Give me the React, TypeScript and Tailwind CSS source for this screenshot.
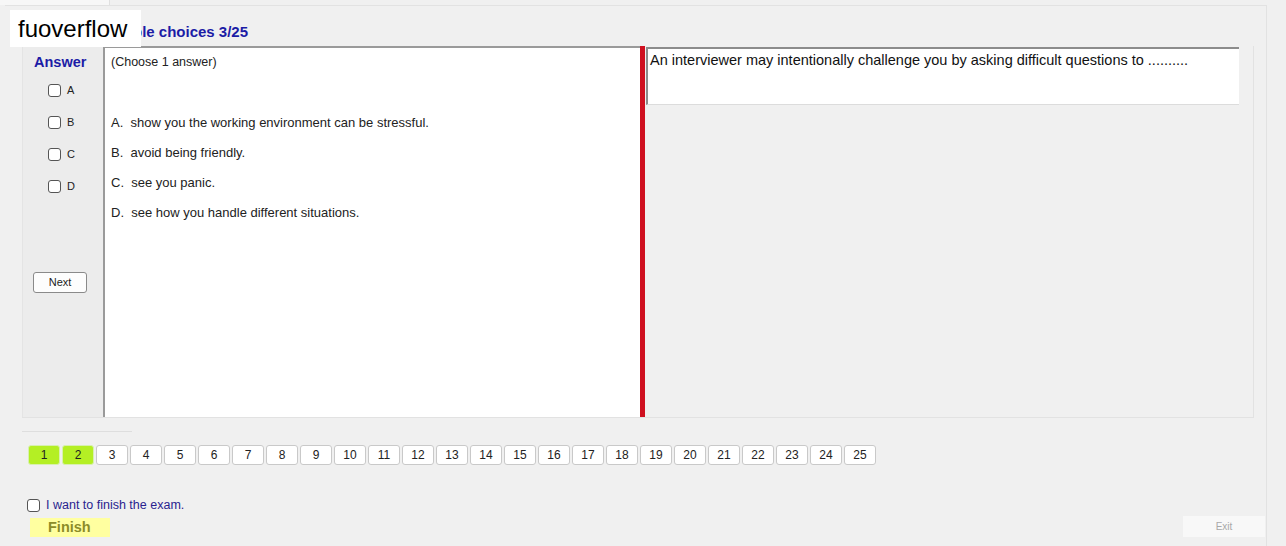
import { useState } from 'react';

const options = [
  'A.  show you the working environment can be stressful.',
  'B.  avoid being friendly.',
  'C.  see you panic.',
  'D.  see how you handle different situations.',
];

function Box({ checked, onClick }: { checked?: boolean; onClick?: () => void }) {
  return (
    <span
      onClick={onClick}
      className={`inline-block w-[13px] h-[13px] rounded-[3px] border border-[#555] ${checked ? 'bg-[#3b6fd6]' : 'bg-white'}`}
    />
  );
}

export default function App() {
  const [answers, setAnswers] = useState<string[]>([]);
  const [finish, setFinish] = useState(false);
  const toggle = (k: string) =>
    setAnswers(a => (a.includes(k) ? a.filter(x => x !== k) : [...a, k]));

  return (
    <div className="relative w-[1286px] h-[546px] overflow-hidden bg-[#f0f0f0] font-['Liberation_Sans',Arial,sans-serif] text-black">
      {/* tab frame */}
      <div className="absolute left-[5px] top-[5px] w-[1262px] h-[545px] border-t border-r border-[#e2e2e2] pointer-events-none" />
      <div className="absolute left-0 top-0 w-[110px] h-[5px] bg-[#f7f7f7] border-r border-[#e0e0e0]" />

      {/* watermark */}
      <div className="absolute left-[10px] top-[10px] w-[131px] h-[37px] bg-white z-10 flex items-center pl-[8px] text-[24px] leading-none">
        fuoverflow
      </div>

      <div className="pt-[23px] pl-[98px] h-[46px] text-[15px] leading-[17px] font-bold text-[#1c1ca6]">Multiple choices 3/25</div>

      {/* main panel */}
      <div className="ml-[22px] w-[1232px] h-[372px] flex border-r border-b border-[#e2e2e2]">
        <div className="w-[81px] bg-[#ececec] border-l border-[#e4e4e4] flex flex-col">
          <div className="pl-[11px] pt-[8px] text-[14.5px] leading-[17px] font-bold text-[#1c1ca6]">Answer</div>
          <div className="flex flex-col gap-[19px] pt-[13px] pl-[25px]">
            {['A', 'B', 'C', 'D'].map(k => (
              <label key={k} className="flex items-center gap-[6px] h-[13px] text-[11px] text-[#222]">
                <Box checked={answers.includes(k)} onClick={() => toggle(k)} />
                {k}
              </label>
            ))}
          </div>
          <button className="mt-[79px] ml-[10px] w-[54px] h-[21px] rounded-[3px] border border-[#8a8a8a] bg-[#fdfdfd] text-[11px] text-[#222]">
            Next
          </button>
        </div>

        <div className="w-[537px] bg-white border-l-2 border-t-2 border-[#9a9a9a] pl-[6px] pt-[5px] text-[13px] text-[#222]">
          <div className="text-[12.5px]">(Choose 1 answer)</div>
          <div className="flex flex-col gap-[15px] pt-[43px]">
            {options.map(o => (
              <div key={o} className="whitespace-pre leading-[15px]">{o}</div>
            ))}
          </div>
        </div>

        <div className="w-[5px] bg-[#cf1020]" />

        <div className="flex-1 pt-[1px] pl-[1px]">
          <div className="w-[593px] h-[58px] bg-white border-t-2 border-l-2 border-[#8c8c8c] border-b border-b-[#dcdcdc] pl-[2px] pt-[2px] text-[14.5px] leading-[18px] text-[#111]">
            An interviewer may intentionally challenge you by asking difficult questions to ..........
          </div>
        </div>
      </div>

      <div className="ml-[22px] mt-[13px] w-[110px] h-px bg-[#dedede]" />

      {/* pager */}
      <div className="flex gap-[2px] ml-[28px] mt-[13px]">
        {Array.from({ length: 25 }, (_, i) => i + 1).map(n => (
          <div
            key={n}
            className={`w-[32px] h-[20px] flex items-center justify-center text-[12px] rounded-[3px] border ${
              n <= 2 ? 'bg-[#b4ef24] border-[#d8f0b0] text-[#222]' : 'bg-white border-[#c9c9c9] text-[#222]'
            }`}
          >
            {n}
          </div>
        ))}
      </div>

      <label className="flex items-center gap-[6px] ml-[27px] mt-[31px] text-[12.5px] text-[#2a1f8f]">
        <Box checked={finish} onClick={() => setFinish(!finish)} />
        I want to finish the exam.
      </label>

      <div className="flex justify-between items-center mt-[3px] pl-[30px] pr-[21px]">
        <button className="w-[80px] h-[19px] bg-[#ffffa0] text-[14.5px] leading-[19px] font-bold text-[#8c8c28] text-left pl-[18px]">Finish</button>
        <button className="w-[82px] h-[21px] -mt-[2px] bg-[#f8f8f8] text-[10px] text-[#a8a8a8]">Exit</button>
      </div>
    </div>
  );
}
